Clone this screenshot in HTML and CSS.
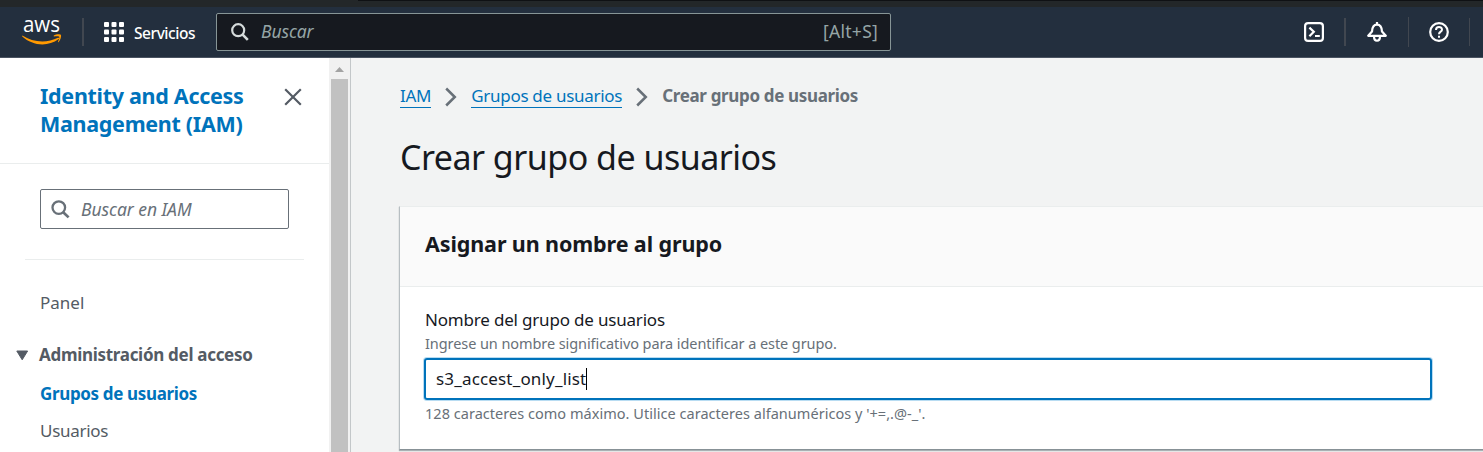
FILE: index.html
```html
<!DOCTYPE html>
<html lang="es">
<head>
<meta charset="utf-8">
<title>Crear grupo de usuarios | IAM</title>
<link rel="stylesheet" href="styles.css">
</head>
<body>
<div class="chrome-strip"><div class="chrome-edge"></div></div>
<header class="nav">
  <svg class="logo" width="40" height="30" viewBox="0 0 40 30">
    <text class="logo-text" x="1" y="15" textLength="37" lengthAdjust="spacingAndGlyphs">aws</text>
    <path d="M0.3 18.6C11 25.6 25 26.4 36 20.8C37 20.3 37.6 21.5 36.7 22C25.5 30.3 10.5 28.7 0.2 19.5Z" fill="#f90"/>
    <path d="M31.6 18.8C34 17 38.2 17 38.9 17.9C39.6 19 38.3 23.5 36.4 25.2C36 25.4 35.8 25.1 36 24.7C36.7 23.2 37.7 20.5 37.2 19.8C36.6 19.1 33.8 19.3 31.9 19.4Z" fill="#f90"/>
  </svg>
  <span class="divider divider-logo"></span>
  <svg class="grid" width="20" height="20" viewBox="0 0 20 20" fill="#fff">
    <rect width="5" height="5" rx="1"/><rect x="7.5" width="5" height="5" rx="1"/><rect x="15" width="5" height="5" rx="1"/>
    <rect y="7.5" width="5" height="5" rx="1"/><rect x="7.5" y="7.5" width="5" height="5" rx="1"/><rect x="15" y="7.5" width="5" height="5" rx="1"/>
    <rect y="15" width="5" height="5" rx="1"/><rect x="7.5" y="15" width="5" height="5" rx="1"/><rect x="15" y="15" width="5" height="5" rx="1"/>
  </svg>
  <span class="services">Servicios</span>
  <div class="search">
    <svg width="18" height="18" viewBox="0 0 18 18" fill="none" stroke="#d5dbdb" stroke-width="2.2"><circle cx="7.2" cy="7.2" r="6"/><path d="M11.4 11.4L16.8 16.8" stroke-width="2.6"/></svg>
    <span class="search-hint">Buscar</span>
    <span class="search-key">[Alt+S]</span>
  </div>
  <div class="tools">
    <svg width="20" height="20" viewBox="0 0 20 20" fill="none" stroke="#fff" stroke-width="2.2"><rect x="1.1" y="1.1" width="17.8" height="17.8" rx="3"/><path d="M5.4 5.6L9.8 9.8L5.4 14.2M11 14H15.8"/></svg>
    <span class="divider wide"></span>
    <svg width="20" height="20" viewBox="0 0 20 20" fill="none" stroke="#fff" stroke-width="2.2" stroke-linejoin="round"><path d="M10 0V2.6M1.2 13.8H18.8L15 9.6C14.8 5.6 13.6 2.6 10 2.6S5.2 5.6 5 9.6Z"/><path d="M7 14.2C7 20.2 13 20.2 13 14.2"/></svg>
    <span class="divider tall"></span>
    <svg width="20" height="20" viewBox="0 0 20 20" fill="none" stroke="#fff" stroke-width="2.2"><circle cx="10" cy="10" r="8.8"/><path d="M7 8C7 4 13 4 13 7.7C13 9.8 10 9.6 10 12.3M10 13.7V15.8" stroke-width="2"/></svg>
    <span class="divider"></span>
  </div>
</header>
<div class="body">
  <aside class="side">
    <div class="side-head">
      <a class="side-title">Identity and Access<br>Management (IAM)</a>
      <svg class="close" width="18" height="18" viewBox="0 0 18 18" stroke="#545b64" stroke-width="2.2"><path d="M1.2 1.2L16.8 16.8M16.8 1.2L1.2 16.8"/></svg>
    </div>
    <div class="side-search">
      <svg width="19" height="19" viewBox="0 0 19 19" fill="none" stroke="#687078" stroke-width="2.3"><circle cx="7.8" cy="7.6" r="6.3"/><path d="M12.2 12.2L17.6 17.4" stroke-width="2.7"/></svg>
      <span class="side-hint">Buscar en IAM</span>
    </div>
    <div class="rule"></div>
    <nav class="menu">
      <a class="item panel">Panel</a>
      <div class="section"><svg width="13" height="11" viewBox="0 0 13 11"><path d="M0.8 1H11.6L6.2 9.8Z" fill="#545b64" stroke="#545b64" stroke-linejoin="round"/></svg><span class="section-name">Administración del acceso</span></div>
      <a class="item active">Grupos de usuarios</a>
      <a class="item users">Usuarios</a>
    </nav>
  </aside>
  <div class="scroll"><svg class="arrow" width="9" height="5" viewBox="0 0 9 5"><path d="M0 5L4.5 0L9 5Z" fill="#a3a3a3"/></svg><div class="thumb"></div></div>
  <main class="main">
    <div class="crumbs">
      <a class="crumb">IAM</a>
      <svg width="12" height="20" viewBox="0 0 12 20" fill="none" stroke="#687078" stroke-width="2.5"><path d="M1.2 1.5L9.8 10L1.2 18.5"/></svg>
      <a class="crumb">Grupos de usuarios</a>
      <svg width="12" height="20" viewBox="0 0 12 20" fill="none" stroke="#687078" stroke-width="2.5"><path d="M1.2 1.5L9.8 10L1.2 18.5"/></svg>
      <span class="here">Crear grupo de usuarios</span>
    </div>
    <h1 class="title">Crear grupo de usuarios</h1>
    <section class="card">
      <div class="card-head"><h2 class="card-title">Asignar un nombre al grupo</h2></div>
      <div class="card-body">
        <div class="label">Nombre del grupo de usuarios</div>
        <div class="help h-top">Ingrese un nombre significativo para identificar a este grupo.</div>
        <div class="field"><span class="value">s3_accest_only_list</span><span class="caret"></span></div>
        <div class="help h-bottom">128 caracteres como máximo. Utilice caracteres alfanuméricos y '+=,.@-_'.</div>
      </div>
    </section>
  </main>
</div>
</body>
</html>
```
FILE: styles.css
```css
* { box-sizing: border-box; }
body { margin: 0; height: 452px; overflow: hidden; background: #f2f3f3; font-family: "Noto Sans", "Open Sans", sans-serif; font-size: 17px; color: #16191f; white-space: nowrap; }
svg { display: block; flex: none; overflow: visible; }
.chrome-strip { height: 7px; background: #232729; }
.chrome-edge { height: 1px; margin-left: 358px; background: #0f1114; }
.nav { height: 51px; background: #232f3e; border-bottom: 1px solid #4a5361; display: flex; align-items: center; padding-left: 22px; }
.logo { margin-top: -1px; }
.logo-text { font-family: "Open Sans", sans-serif; font-size: 22px; font-weight: 500; fill: #fff; }
.divider { width: 1px; height: 28px; background: #414750; flex: none; }
.divider-logo { width: 2px; margin-left: 20px; }
.grid { margin-left: 20px; }
.services { margin: 1px 0 0 10px; flex: none; width: 82px; color: #fff; font-size: 15.5px; font-weight: 500; letter-spacing: -0.45px; }
.search { width: 675px; height: 38px; flex: none; background: #16191f; border: 1px solid #879596; border-radius: 2px; display: flex; align-items: center; padding: 0 12px 0 14px; color: #95a5a6; }
.search-hint { margin: -2px 0 0 12px; font-style: italic; font-size: 17.5px; letter-spacing: -0.1px; }
.search-key { margin: -2px 0 0 auto; font-size: 17.5px; letter-spacing: 0.25px; }
.tools { display: flex; align-items: center; margin-left: 413px; }
.tools .divider { margin-left: 20px; margin-right: 21px; }
.tools .wide { width: 2px; }
.tools .tall { height: 30px; margin-left: 21px; margin-right: 20px; }
.body { display: flex; height: 394px; }
.side { width: 329px; flex: none; background: #fff; }
.side-head { height: 106px; border-bottom: 1px solid #eaeded; display: flex; justify-content: space-between; padding: 24px 27px 0 40px; }
.side-title { color: #0073bb; font-size: 21.5px; line-height: 28px; font-weight: 700; letter-spacing: -0.3px; }
.close { margin-top: 6px; }
.side-search { margin: 25px 0 0 40px; width: 249px; height: 40px; border: 1px solid #687078; border-radius: 2px; display: flex; align-items: center; padding-left: 10px; }
.side-hint { margin: -1px 0 0 11px; font-size: 17.5px; font-style: italic; color: #687078; letter-spacing: -0.05px; }
.rule { margin: 30px 25px 0; height: 1px; background: #eaeded; }
.menu { padding-top: 31px; display: flex; flex-direction: column; color: #545b64; }
.item { display: block; margin-left: 40px; height: 24px; line-height: 24px; letter-spacing: -0.3px; }
.panel { letter-spacing: 0; }
.section { margin-top: 28px; height: 24px; line-height: 24px; display: flex; align-items: center; padding-left: 16px; font-weight: 700; letter-spacing: -0.3px; }
.section-name { margin-left: 10px; }
.active { margin-top: 15px; color: #0073bb; font-weight: 700; letter-spacing: -0.35px; }
.users { margin-top: 13px; }
.scroll { width: 22px; flex: none; background: #f1f1f1; border-right: 1px solid #c3c7c9; display: flex; flex-direction: column; padding: 9px 2px 0; }
.arrow { margin-left: 4px; }
.thumb { flex: 1; margin-top: 7px; background: #c1c1c1; width: 17px; }
.main { flex: 1; min-width: 0; padding-left: 49px; }
.crumbs { display: flex; align-items: center; padding-top: 28px; height: 50px; }
.crumbs svg { margin: 0 14px; }
.crumb { height: 22px; line-height: 20px; color: #0073bb; border-bottom: 1px solid #0073bb; letter-spacing: -0.29px; }
.here { height: 22px; line-height: 20px; color: #687078; font-weight: 700; letter-spacing: -0.34px; }
.title { margin: 25px 0 0; height: 48px; line-height: 48px; font-size: 34px; font-weight: 400; letter-spacing: -0.52px; }
.card { margin: 25px 0 0 -1px; background: #fff; height: 244px; border: 1px solid #eaeded; border-right: 0; border-left-color: #b7bec2; border-bottom-color: #879196; box-shadow: 0 1px 1px rgba(0,28,36,.3); }
.card-head { height: 80px; background: #fafafa; border-bottom: 1px solid #eaeded; padding: 20px 25px 0; }
.card-title { margin: 0; font-size: 21.5px; line-height: 34px; letter-spacing: -0.11px; }
.card-body { padding: 21px 51px 0 25px; }
.label { height: 24px; line-height: 24px; letter-spacing: -0.19px; }
.help { font-size: 14.5px; line-height: 20px; height: 20px; color: #687078; }
.h-top { margin-top: 1px; letter-spacing: -0.08px; }
.field { margin: 5px 0 0 -1px; width: 1008px; height: 42px; border: 2px solid #0073bb; border-radius: 3px; box-shadow: 0 0 0 1px #b8dcf2; display: flex; align-items: center; padding-left: 10px; }
.value { margin-top: -2px; letter-spacing: 0.17px; }
.caret { width: 1px; height: 22px; background: #000; }
.h-bottom { margin-top: 3px; letter-spacing: 0.03px; }
```
